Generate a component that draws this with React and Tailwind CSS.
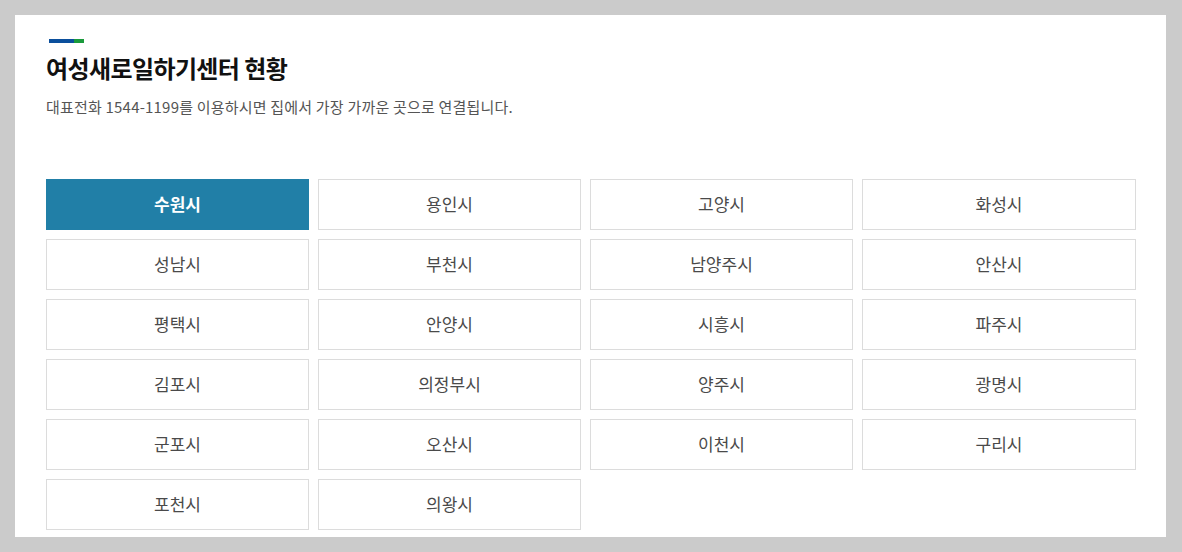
import React from 'react';

const cities = [
  '수원시', '용인시', '고양시', '화성시',
  '성남시', '부천시', '남양주시', '안산시',
  '평택시', '안양시', '시흥시', '파주시',
  '김포시', '의정부시', '양주시', '광명시',
  '군포시', '오산시', '이천시', '구리시',
  '포천시', '의왕시',
];

const font = { fontFamily: '"Noto Sans CJK KR", "Noto Sans", sans-serif' };

export default function App() {
  return (
    <div className="h-[552px] w-[1182px] bg-[#cbcbcb] pt-[15px] pl-[15px]" style={font}>
      <div className="h-[522px] w-[1151px] bg-white pl-[31px] pt-[24px]">
        <div className="ml-[3px] flex h-[4px] w-[35px]">
          <span className="w-[25px] bg-[#0b4f9c]"></span>
          <span className="w-[10px] bg-[#1a9a3c]"></span>
        </div>
        <h2 className="mt-[9px] text-[24px] leading-[32px] font-bold tracking-[-0.6px] text-[#111]">
          여성새로일하기센터 현황
        </h2>
        <p className="mt-[12px] text-[15px] leading-[22px] tracking-[0.2px] text-[#555]">
          대표전화 1544-1199를 이용하시면 집에서 가장 가까운 곳으로 연결됩니다.
        </p>
        <div className="mt-[61px] grid grid-cols-[263px_263px_263px_274px] gap-x-[9px] gap-y-[9px]">
          {cities.map((c, i) => (
            <div
              key={c}
              className={
                i === 0
                  ? 'flex h-[51px] items-center justify-center bg-[#217fa7] pb-[1px] text-[17px] font-bold text-white'
                  : 'flex h-[51px] items-center justify-center border border-[#dcdcdc] pb-[1px] text-[17px] text-[#4a4a4a]'
              }
            >
              {c}
            </div>
          ))}
        </div>
      </div>
    </div>
  );
}
